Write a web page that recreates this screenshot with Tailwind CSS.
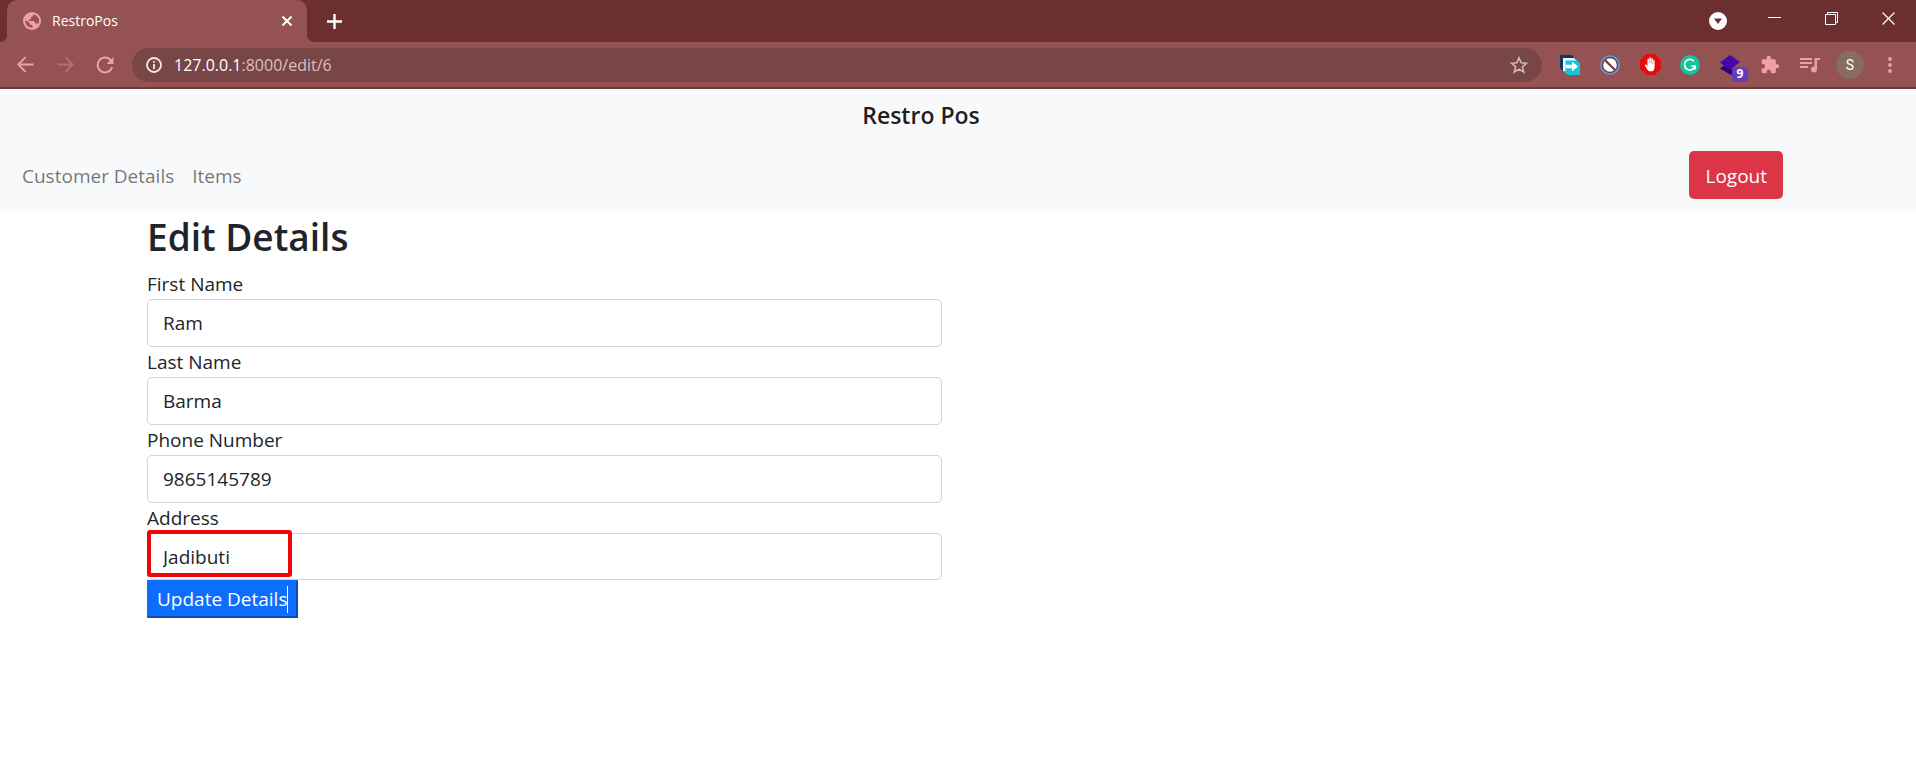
<!DOCTYPE html>
<html lang="en">
<head>
<meta charset="utf-8">
<title>RestroPos</title>
<script src="https://cdn.jsdelivr.net/npm/@tailwindcss/browser@4"></script>
</head>
<body class="min-h-screen bg-white font-['Open_Sans',sans-serif] text-[19px] leading-[30px] text-[#212529]">
<div class="border-b-2 border-[#6e3b3d] bg-[#955252]">
  <div class="flex h-[42px] bg-[#6b2f2f]">
    <div class="flex w-[7px] items-end bg-[#955252]"><div class="h-full w-full rounded-br-[7px] bg-[#6b2f2f]"></div></div>
    <div class="flex w-[300px] items-center rounded-t-[10px] bg-[#955252] pr-2 pl-4 text-sm text-white">
      <svg class="size-[18px]" viewBox="0 0 18 18"><circle cx="9" cy="9" r="9" fill="#f2a0a3"/><path d="M10.500 2.200c-.2 1.800-1 2.500-2.500 2.600v1.500c0 .8-.5 1.200-1.300 1.200H5.500c.2 1 1 1.500 2 1.500h2.800c1 0 1.500.6 1.500 1.400 0 .7.4 1 1.100 1h2.700a6.800 6.800 0 0 0-5.100-9.200zM2.200 8.500a6.800 6.800 0 0 0 7.300 7.300v-1.500c0-.8-.5-1.300-1.300-1.300-1.200 0-1.700-.6-1.700-1.700 0-1-.6-1.500-1.500-1.800z" fill="#955252"/></svg>
      <span class="ml-[11px] flex-1">RestroPos</span>
      <button aria-label="Close tab" class="flex size-6 items-center justify-center"><svg class="size-[10px]" viewBox="0 0 10 10" stroke="#fff" stroke-width="2"><path d="M.5.5l9 9M9.500.5l-9 9"/></svg></button>
    </div>
    <div class="flex w-[7px] bg-[#955252]"><div class="h-full w-full rounded-bl-[7px] bg-[#6b2f2f]"></div></div>
    <button aria-label="New tab" class="flex w-10 items-center justify-center"><svg class="size-[15px]" viewBox="0 0 15 15" stroke="#fff" stroke-width="2.400"><path d="M7.500 0v15M0 7.500h15"/></svg></button>
    <div class="ml-auto flex">
      <button aria-label="Search tabs" class="flex w-14 items-center justify-center"><svg class="size-[18px]" viewBox="0 0 18 18"><circle cx="9" cy="9" r="9" fill="#fff"/><path d="M5 6.500h8L9 12z" fill="#6b2f2f"/></svg></button>
      <button aria-label="Minimize" class="flex w-[57px] items-center justify-center pb-2"><svg class="size-[13px]" viewBox="0 0 13 13" stroke="#fff"><path d="M0 6.500h13"/></svg></button>
      <button aria-label="Restore" class="flex w-[57px] items-center justify-center pb-[6px]"><svg class="size-[13px]" viewBox="0 0 13 13" fill="none" stroke="#fff"><path d="M.5 2.500h10v10H.5zM2.500 2.500v-2h10v10h-2"/></svg></button>
      <button aria-label="Close window" class="flex w-14 items-center justify-center pb-[6px]"><svg class="size-[13px]" viewBox="0 0 13 13" stroke="#fff" stroke-width="1.200"><path d="M.5.5l12 12M12.500.5l-12 12"/></svg></button>
    </div>
  </div>
  <div class="flex h-[45px] items-center pr-[6px] pl-[5px]">
    <button aria-label="Back" class="flex w-10 justify-center"><svg class="size-[17px]" viewBox="0 0 17 17" fill="none" stroke="#f0a0a2" stroke-width="1.900"><path d="M16.500 8.500H1.500M8.500 1.200L1.300 8.500l7.200 7.300"/></svg></button>
    <button aria-label="Forward" class="flex w-10 justify-center"><svg class="size-[17px]" viewBox="0 0 17 17" fill="none" stroke="#b96f71" stroke-width="1.900"><path d="M.5 8.500h15M8.500 1.200l7.200 7.300-7.200 7.300"/></svg></button>
    <button aria-label="Reload" class="flex w-10 justify-center"><svg class="size-[18px]" viewBox="0 0 18 18"><path d="M14.800 4.300A7.400 7.400 0 1 0 16.200 11" fill="none" stroke="#f0a0a2" stroke-width="2"/><path d="M17.500 1v7h-7z" fill="#f0a0a2"/></svg></button>
    <div class="ml-[7px] flex h-[34px] flex-1 items-center rounded-full bg-[#784647] px-[14px]">
      <svg class="size-4" viewBox="0 0 16 16"><circle cx="8" cy="8" r="7" fill="none" stroke="#f6e8e8" stroke-width="1.800"/><path d="M7.100 7h1.800v5H7.100zM7.100 4h1.800v1.800H7.100z" fill="#f6e8e8"/></svg>
      <a href="#" class="ml-3 flex-1 text-base text-[#d9bfc0]"><span class="text-white">127.0.0.1</span>:8000/edit/6</a>
      <button aria-label="Bookmark"><svg class="size-[18px]" viewBox="0 0 18 18" fill="none" stroke="#d2bcbc" stroke-width="1.500"><path d="M9 1.800l2.100 5 5.400.5-4.100 3.500 1.300 5.300L9 13.200l-4.700 2.900 1.300-5.300-4.100-3.500 5.400-.5z"/></svg></button>
    </div>
    <div class="ml-2 flex items-center">
      <button aria-label="Tab export extension" class="flex w-10 justify-center"><svg class="size-5" viewBox="0 0 20 20"><path d="M0 0h12l2 3H3v13L0 13z" fill="#17365f"/><path d="M3 3h11l6 5v12H8l-5-4z" fill="#12c4dc"/><path d="M3 3h10.500l3 2.500H5.500V16H3z" fill="#e9fbff"/><path d="M5.500 9.700h6.500V6.500l6 5-6 5v-3.200H5.500z" fill="#fff"/></svg></button>
      <button aria-label="Blocker extension" class="flex w-10 justify-center"><svg class="size-5" viewBox="0 0 20 20"><circle cx="10" cy="10" r="9" fill="#6b3a45" stroke="#629bdd" stroke-width="1.600"/><circle cx="10" cy="10" r="6.800" fill="#fff"/><path d="M5 5l10 10" stroke="#783638" stroke-width="2.200"/></svg></button>
      <button aria-label="AdBlock" class="flex w-10 justify-center"><svg class="size-[21px]" viewBox="0 0 20 20"><path d="M6 0h8l6 6v8l-6 6H6l-6-6V6z" fill="#e40b0b"/><path d="M8.500 16.500c-1.500-1-2.500-3-3.700-5.500-.3-.9.700-1.300 1.300-.6l1 1.200V5.200c0-1 1.300-1 1.400 0V9h.4V3.800c0-1 1.500-1 1.500 0V9h.4V4.500c0-1 1.400-1 1.400 0v5h.4V6.200c0-.9 1.300-.9 1.300 0V12c0 2.500-.8 3.700-1.700 4.500z" fill="#fff"/></svg></button>
      <button aria-label="Grammarly" class="flex w-10 justify-center"><svg class="size-5" viewBox="0 0 20 20"><circle cx="10" cy="10" r="10" fill="#15c39a"/><path d="M13.800 6.200A5.300 5.300 0 1 0 15 11h-3.800M15.200 14.500V11" fill="none" stroke="#fff" stroke-width="1.700"/></svg></button>
      <button aria-label="Layers extension, 9 items" class="relative flex w-10 justify-center"><svg class="size-5" viewBox="0 0 20 20"><path d="M0 13.500L5 10l10 6-4 4z" fill="#270078"/><path d="M10 0l10 7-10 8L0 7.500z" fill="#4804ad"/></svg><span class="absolute top-3 right-[2px] flex h-[15px] w-4 items-center justify-center rounded-sm bg-[#673ab7] text-xs font-bold text-white">9</span></button>
      <button aria-label="Extensions" class="flex w-10 justify-center"><svg class="size-5" viewBox="0 0 24 24" fill="#f0a0a2"><path d="M20.500 11H19V7a2 2 0 0 0-2-2h-4V3.500a2.500 2.500 0 0 0-5 0V5H4a2 2 0 0 0-2 2v3.800h1.500a2.700 2.700 0 0 1 0 5.400H2V20a2 2 0 0 0 2 2h3.800v-1.500a2.700 2.700 0 0 1 5.400 0V22H17a2 2 0 0 0 2-2v-4h1.500a2.500 2.500 0 0 0 0-5z"/></svg></button>
      <button aria-label="Media controls" class="flex w-10 justify-center"><svg class="h-4 w-5" viewBox="0 0 20 16" fill="#f0a0a2"><path d="M0 1h12v2H0zM0 5h12v2H0zM0 9h8v2H0zM14.500 1H20v2h-3v9.500a3 3 0 1 1-2.500-3z"/></svg></button>
      <button aria-label="Profile" class="flex w-10 justify-center"><span class="flex size-7 items-center justify-center rounded-full bg-[#886c5f] font-[Roboto,sans-serif] text-sm text-white">S</span></button>
      <button aria-label="Menu" class="flex w-10 justify-center"><svg class="h-4 w-1" viewBox="0 0 4 16" fill="#f0a0a2"><circle cx="2" cy="2" r="1.900"/><circle cx="2" cy="8" r="1.900"/><circle cx="2" cy="14" r="1.900"/></svg></button>
    </div>
  </div>
</div>
<header class="bg-[#f8f9fa] pt-[7px] pb-3">
  <div class="flex justify-center pr-[74px]"><a href="#" class="text-[23px] leading-[38px] font-semibold text-black/90">Restro Pos</a></div>
  <nav class="mt-[17px] flex items-center gap-[18px] pr-[133px] pl-[22px]">
    <a href="#" class="pt-[2px] text-black/55">Customer Details</a>
    <a href="#" class="pt-[2px] text-black/55">Items</a>
    <button class="ml-auto h-12 rounded-[5px] bg-[#dc3545] px-4 pt-[2px] text-white">Logout</button>
  </nav>
</header>
<main class="mx-auto max-w-[1652px] px-[15px]">
  <h1 class="mb-2 pt-[2px] text-[37px] leading-[48px] font-semibold">Edit Details</h1>
  <form class="w-1/2 pr-4">
    <label for="first" class="block">First Name</label>
    <input id="first" value="Ram" class="block h-12 w-full rounded-[5px] border border-[#ced4da] px-[15px]">
    <label for="last" class="block">Last Name</label>
    <input id="last" value="Barma" class="block h-12 w-full rounded-[5px] border border-[#ced4da] px-[15px]">
    <label for="phone" class="block">Phone Number</label>
    <input id="phone" value="9865145789" class="block h-12 w-full rounded-[5px] border border-[#ced4da] px-[15px]">
    <label for="address" class="block">Address</label>
    <div class="relative">
      <input id="address" value="Jadibuti" class="block h-[47px] w-full rounded-[5px] border border-[#ced4da] px-[15px]">
      <div class="pointer-events-none absolute -top-[3px] left-0 h-[47px] w-[145px] rounded-[3px] border-4 border-[#f20509]"></div>
    </div>
    <button type="button" class="flex h-[38px] items-center border-2 border-t-[#0d6efd] border-r-[#0a4cb0] border-b-[#0a4cb0] border-l-[#0d6efd] bg-[#0d6efd] px-2 text-white">Update Details<span class="h-[27px] w-px bg-white"></span></button>
  </form>
</main>
</body>
</html>
